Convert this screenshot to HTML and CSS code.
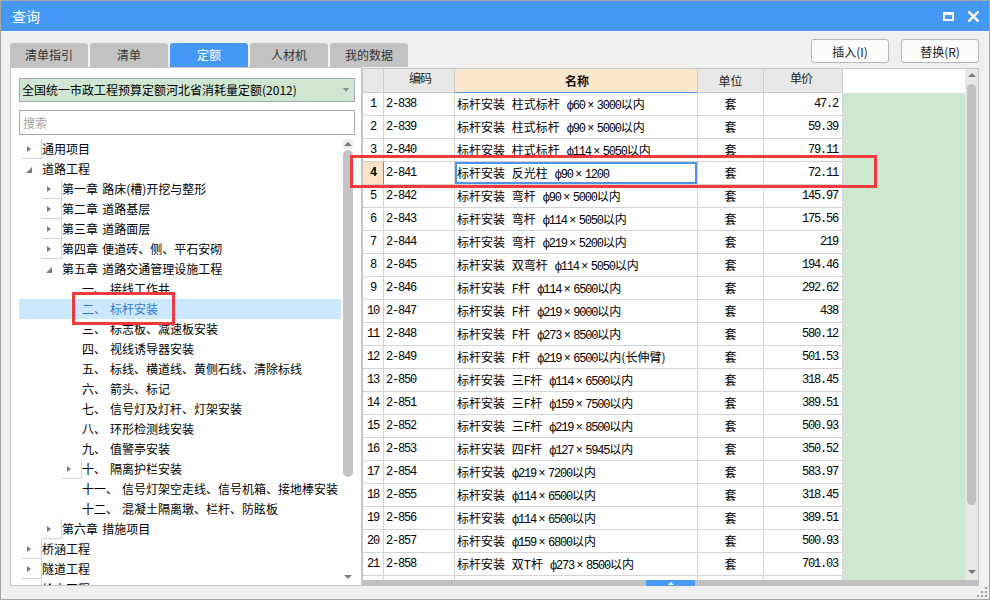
FILE: index.html
```html
<!DOCTYPE html>
<html lang="zh-CN">
<head>
<meta charset="utf-8">
<title>查询</title>
<link rel="stylesheet" href="styles.css">
</head>
<body>
<div class="window">
  <div class="titlebar">
    <span class="title">查询</span>
    <div class="winbtns">
      <svg width="11" height="9" viewBox="0 0 11 9"><rect x="1" y="1.5" width="9" height="6.5" fill="none" stroke="#fff" stroke-width="2"/><rect x="0" y="0" width="11" height="3" fill="#fff"/></svg>
      <svg width="11" height="11" viewBox="0 0 11 11"><path d="M1.2 1.2L9.8 9.8M9.8 1.2L1.2 9.8" stroke="#fff" stroke-width="2.4" stroke-linecap="square"/></svg>
    </div>
  </div>
  <div class="content">
    <div class="left">
      <div class="tabs">
        <div class="tab">清单指引</div>
        <div class="tab">清单</div>
        <div class="tab on">定额</div>
        <div class="tab">人材机</div>
        <div class="tab">我的数据</div>
      </div>
      <div class="panel">
        <div class="select"><span>全国统一市政工程预算定额河北省消耗量定额(2012)</span><i class="caret"></i></div>
        <div class="search">搜索</div>
        <div class="treewrap">
          <div class="tree">
            <div class="row l0"><i class="tw c"></i><span>通用项目</span></div>
            <div class="row l0"><i class="tw e"></i><span>道路工程</span></div>
            <div class="row l1"><i class="tw c"></i><span>第一章 路床(槽)开挖与整形</span></div>
            <div class="row l1"><i class="tw c"></i><span>第二章 道路基层</span></div>
            <div class="row l1"><i class="tw c"></i><span>第三章 道路面层</span></div>
            <div class="row l1"><i class="tw c"></i><span>第四章 便道砖、侧、平石安砌</span></div>
            <div class="row l1"><i class="tw e"></i><span>第五章 道路交通管理设施工程</span></div>
            <div class="row l2"><i class="tw"></i><span class="num">一、</span><span>接线工作井</span></div>
            <div class="row l2 sel"><i class="tw"></i><span class="num">二、</span><span>标杆安装</span></div>
            <div class="row l2"><i class="tw"></i><span class="num">三、</span><span>标志板、减速板安装</span></div>
            <div class="row l2"><i class="tw"></i><span class="num">四、</span><span>视线诱导器安装</span></div>
            <div class="row l2"><i class="tw"></i><span class="num">五、</span><span>标线、横道线、黄侧石线、清除标线</span></div>
            <div class="row l2"><i class="tw"></i><span class="num">六、</span><span>箭头、标记</span></div>
            <div class="row l2"><i class="tw"></i><span class="num">七、</span><span>信号灯及灯杆、灯架安装</span></div>
            <div class="row l2"><i class="tw"></i><span class="num">八、</span><span>环形检测线安装</span></div>
            <div class="row l2"><i class="tw"></i><span class="num">九、</span><span>值警亭安装</span></div>
            <div class="row l2"><i class="tw c"></i><span class="num">十、</span><span>隔离护栏安装</span></div>
            <div class="row l2"><i class="tw"></i><span class="num">十一、</span><span>信号灯架空走线、信号机箱、接地棒安装</span></div>
            <div class="row l2"><i class="tw"></i><span class="num">十二、</span><span>混凝土隔离墩、栏杆、防眩板</span></div>
            <div class="row l1"><i class="tw c"></i><span>第六章 措施项目</span></div>
            <div class="row l0"><i class="tw c"></i><span>桥涵工程</span></div>
            <div class="row l0"><i class="tw c"></i><span>隧道工程</span></div>
            <div class="row l0"><i class="tw c"></i><span>给水工程</span></div>
          </div>
          <div class="vs-s">
            <div class="arr"><i class="up"></i></div>
            <div class="thumb"></div>
            <div class="fill"></div>
            <div class="arr dn-wrap"><i class="dn"></i></div>
          </div>
        </div>
      </div>
    </div>
    <div class="right">
      <div class="btns">
        <button class="btn">插入(I)</button>
        <button class="btn">替换(R)</button>
      </div>
      <div class="tablebox">
        <div class="tmain">
          <div class="grid">
            <div class="r hd"><div class="c n"></div><div class="c k">编码</div><div class="c nm">名称</div><div class="c u">单位</div><div class="c p">单价</div><div class="c f"></div></div>
            <div class="r"><div class="c n">1</div><div class="c k">2-838</div><div class="c nm">标杆安装 柱式标杆<span class="s">ф60</span><span class="x">×</span><span class="m">3000</span>以内</div><div class="c u">套</div><div class="c p">47.2</div><div class="c f"></div></div>
            <div class="r"><div class="c n">2</div><div class="c k">2-839</div><div class="c nm">标杆安装 柱式标杆<span class="s">ф90</span><span class="x">×</span><span class="m">5000</span>以内</div><div class="c u">套</div><div class="c p">59.39</div><div class="c f"></div></div>
            <div class="r"><div class="c n">3</div><div class="c k">2-840</div><div class="c nm">标杆安装 柱式标杆<span class="s">ф114</span><span class="x">×</span><span class="m">5050</span>以内</div><div class="c u">套</div><div class="c p">79.11</div><div class="c f"></div></div>
            <div class="r cur"><div class="c n">4</div><div class="c k">2-841</div><div class="c nm">标杆安装 反光柱<span class="s">ф90</span><span class="x">×</span><span class="m">1200</span></div><div class="c u">套</div><div class="c p">72.11</div><div class="c f"></div></div>
            <div class="r"><div class="c n">5</div><div class="c k">2-842</div><div class="c nm">标杆安装 弯杆<span class="s">ф90</span><span class="x">×</span><span class="m">5000</span>以内</div><div class="c u">套</div><div class="c p">145.97</div><div class="c f"></div></div>
            <div class="r"><div class="c n">6</div><div class="c k">2-843</div><div class="c nm">标杆安装 弯杆<span class="s">ф114</span><span class="x">×</span><span class="m">5050</span>以内</div><div class="c u">套</div><div class="c p">175.56</div><div class="c f"></div></div>
            <div class="r"><div class="c n">7</div><div class="c k">2-844</div><div class="c nm">标杆安装 弯杆<span class="s">ф219</span><span class="x">×</span><span class="m">5200</span>以内</div><div class="c u">套</div><div class="c p">219</div><div class="c f"></div></div>
            <div class="r"><div class="c n">8</div><div class="c k">2-845</div><div class="c nm">标杆安装 双弯杆<span class="s">ф114</span><span class="x">×</span><span class="m">5050</span>以内</div><div class="c u">套</div><div class="c p">194.46</div><div class="c f"></div></div>
            <div class="r"><div class="c n">9</div><div class="c k">2-846</div><div class="c nm">标杆安装 F杆<span class="s">ф114</span><span class="x">×</span><span class="m">6500</span>以内</div><div class="c u">套</div><div class="c p">292.62</div><div class="c f"></div></div>
            <div class="r"><div class="c n">10</div><div class="c k">2-847</div><div class="c nm">标杆安装 F杆<span class="s">ф219</span><span class="x">×</span><span class="m">9000</span>以内</div><div class="c u">套</div><div class="c p">438</div><div class="c f"></div></div>
            <div class="r"><div class="c n">11</div><div class="c k">2-848</div><div class="c nm">标杆安装 F杆<span class="s">ф273</span><span class="x">×</span><span class="m">8500</span>以内</div><div class="c u">套</div><div class="c p">580.12</div><div class="c f"></div></div>
            <div class="r"><div class="c n">12</div><div class="c k">2-849</div><div class="c nm">标杆安装 F杆<span class="s">ф219</span><span class="x">×</span><span class="m">6500</span>以内(长伸臂)</div><div class="c u">套</div><div class="c p">501.53</div><div class="c f"></div></div>
            <div class="r"><div class="c n">13</div><div class="c k">2-850</div><div class="c nm">标杆安装 三F杆<span class="s">ф114</span><span class="x">×</span><span class="m">6500</span>以内</div><div class="c u">套</div><div class="c p">318.45</div><div class="c f"></div></div>
            <div class="r"><div class="c n">14</div><div class="c k">2-851</div><div class="c nm">标杆安装 三F杆<span class="s">ф159</span><span class="x">×</span><span class="m">7500</span>以内</div><div class="c u">套</div><div class="c p">389.51</div><div class="c f"></div></div>
            <div class="r"><div class="c n">15</div><div class="c k">2-852</div><div class="c nm">标杆安装 三F杆<span class="s">ф219</span><span class="x">×</span><span class="m">8500</span>以内</div><div class="c u">套</div><div class="c p">500.93</div><div class="c f"></div></div>
            <div class="r"><div class="c n">16</div><div class="c k">2-853</div><div class="c nm">标杆安装 四F杆<span class="s">ф127</span><span class="x">×</span><span class="m">5945</span>以内</div><div class="c u">套</div><div class="c p">350.52</div><div class="c f"></div></div>
            <div class="r"><div class="c n">17</div><div class="c k">2-854</div><div class="c nm">标杆安装<span class="s">ф219</span><span class="x">×</span><span class="m">7200</span>以内</div><div class="c u">套</div><div class="c p">583.97</div><div class="c f"></div></div>
            <div class="r"><div class="c n">18</div><div class="c k">2-855</div><div class="c nm">标杆安装<span class="s">ф114</span><span class="x">×</span><span class="m">6500</span>以内</div><div class="c u">套</div><div class="c p">318.45</div><div class="c f"></div></div>
            <div class="r"><div class="c n">19</div><div class="c k">2-856</div><div class="c nm">标杆安装<span class="s">ф114</span><span class="x">×</span><span class="m">6500</span>以内</div><div class="c u">套</div><div class="c p">389.51</div><div class="c f"></div></div>
            <div class="r"><div class="c n">20</div><div class="c k">2-857</div><div class="c nm">标杆安装<span class="s">ф159</span><span class="x">×</span><span class="m">6800</span>以内</div><div class="c u">套</div><div class="c p">500.93</div><div class="c f"></div></div>
            <div class="r"><div class="c n">21</div><div class="c k">2-858</div><div class="c nm">标杆安装 双T杆<span class="s">ф273</span><span class="x">×</span><span class="m">8500</span>以内</div><div class="c u">套</div><div class="c p">701.03</div><div class="c f"></div></div>
            <div class="r"><div class="c n"></div><div class="c k"></div><div class="c nm"></div><div class="c u"></div><div class="c p"></div><div class="c f"></div></div>
          </div>
          <div class="vs-b">
            <div class="arr"><i class="up"></i></div>
            <div class="thumb"></div>
            <div class="fill"></div>
            <div class="arr"><i class="dn"></i></div>
          </div>
        </div>
        <div class="hscroll"><div class="hthumb"><i class="hup"></i></div></div>
      </div>
    </div>
  </div>
  <div class="mark mark-tree"></div>
  <div class="mark mark-row"></div>
  <svg class="grip" width="10" height="10" viewBox="0 0 10 10" fill="#a0a0a0">
    <rect x="8" y="0" width="2" height="2"/>
    <rect x="4" y="4" width="2" height="2"/><rect x="8" y="4" width="2" height="2"/>
    <rect x="0" y="8" width="2" height="2"/><rect x="4" y="8" width="2" height="2"/><rect x="8" y="8" width="2" height="2"/>
  </svg>
</div>
</body>
</html>
```

FILE: styles.css
```css
* { box-sizing: border-box; }
html, body { margin: 0; padding: 0; background: #f0f0f0; }
body {
  font-family: "Noto Sans CJK SC", "Microsoft YaHei", sans-serif;
  font-size: 12px;
  color: #000;
}
.window {
  position: relative;
  width: 990px;
  height: 600px;
  border: 1px solid #a6a6a6;
  background: #f0f0f0;
  display: flex;
  flex-direction: column;
  overflow: hidden;
}
.titlebar {
  flex: none;
  height: 30px;
  background: #4499f7;
  color: #fff;
  display: flex;
  align-items: center;
  justify-content: space-between;
  padding: 0 10px 0 11px;
}
.title { font-size: 14px; line-height: 30px; }
.winbtns { display: flex; align-items: center; gap: 14px; }
.winbtns svg { display: block; }

.content {
  flex: 1;
  min-height: 0;
  display: flex;
  padding: 0 9px 13px 9px;
}

/* left */
.left { width: 352px; flex: none; display: flex; flex-direction: column; position: relative; z-index: 1; }
.tabs { display: flex; gap: 2px; margin-top: 12px; height: 24px; flex: none; }
.tab {
  flex: none;
  width: 78px;
  height: 24px;
  background: #c3c3c3;
  border-radius: 3px 3px 0 0;
  color: #333;
  text-align: center;
  line-height: 24px;
}
.tab.on { background: #4499f7; color: #fff; }
.panel {
  flex: 1;
  min-height: 0;
  background: #fff;
  border: 1px solid #c6c6c6;
  padding: 10px 6px 0 8px;
  display: flex;
  flex-direction: column;
}
.select {
  flex: none;
  height: 24px;
  border: 1px solid #a9a9a9;
  background: #cfe7d2;
  display: flex;
  align-items: center;
  padding-left: 2px;
  line-height: 22px;
}
.caret {
  margin-left: auto;
  margin-right: 5px;
  width: 0; height: 0;
  border-left: 3.5px solid transparent;
  border-right: 3.5px solid transparent;
  border-top: 4px solid #8a8a8a;
}
.search {
  flex: none;
  height: 25px;
  margin-top: 8px;
  border: 1px solid #a9a9a9;
  color: #a3a3a3;
  line-height: 23px;
  padding-left: 3px;
}
.treewrap { flex: 1; min-height: 0; display: flex; margin-top: 4px; }
.tree { flex: 1; overflow: hidden; }
.row {
  height: 20px;
  display: flex;
  align-items: center;
  white-space: nowrap;
  line-height: 20px;
  word-spacing: 1.5px;
}
.l0 { padding-left: 3px; }
.l1 { padding-left: 23px; }
.l2 { padding-left: 43px; }
.tw { width: 20px; height: 20px; flex: none; display: flex; align-items: center; }
.tw.c::before {
  content: "";
  display: block;
  width: 0;
  height: 0;
  margin-left: 5px;
  border-left: 4px solid #7d7d7d;
  border-top: 3.5px solid transparent;
  border-bottom: 3.5px solid transparent;
}
.tw.e::before {
  content: "";
  display: block;
  width: 0;
  height: 0;
  margin-left: 4px;
  margin-top: 2px;
  border-bottom: 6px solid #7d7d7d;
  border-left: 6px solid transparent;
}
.num { margin-right: 4px; }
.row.sel { background: #cce8ff; color: #2c7ad8; }

.vs-s {
  width: 10px;
  margin: 0 2px;
  flex: none;
  display: flex;
  flex-direction: column;
  align-items: center;
}
.arr { height: 10px; width: 100%; flex: none; display: flex; align-items: center; justify-content: center; }
.vs-s .arr:first-child { background: #ececec; }
.up {
  display: block;
  width: 0; height: 0;
  border-left: 4px solid transparent;
  border-right: 4px solid transparent;
  border-bottom: 4px solid #7a7a7a;
}
.dn {
  display: block;
  width: 0; height: 0;
  border-left: 4px solid transparent;
  border-right: 4px solid transparent;
  border-top: 4px solid #7a7a7a;
}
.vs-s .thumb { width: 10px; height: 327px; margin-top: 1px; border-radius: 5px; background: #c3c3c3; }
.fill { flex: 1; }
.vs-s .dn-wrap { margin-bottom: 3px; }

/* right */
.right { width: 617px; flex: none; display: flex; flex-direction: column; }
.btns { display: flex; justify-content: flex-end; gap: 12px; margin-top: 8px; }
.btn {
  width: 78px;
  height: 24px;
  padding: 0;
  border: 1px solid #b6b6b6;
  border-radius: 3px;
  background: #fcfcfc;
  color: #222;
  font-family: "Noto Sans CJK SC", sans-serif;
  font-size: 12px;
}
.tablebox {
  flex: 1;
  min-height: 0;
  margin-top: 5px;
  border: 1px solid #c4c4c4;
  border-bottom: none;
  background: #fff;
  display: flex;
  flex-direction: column;
}
.tmain { flex: 1; min-height: 0; display: flex; }
.grid { width: 602px; flex: none; overflow: hidden; }
.r { display: flex; height: 23px; }
.r.hd { height: 24px; }
.c {
  flex: none;
  height: 100%;
  border-right: 1px solid #d4d4d4;
  border-bottom: 1px solid #d4d4d4;
  line-height: 22px;
  white-space: nowrap;
  overflow: hidden;
}
.hd .c { line-height: 23px; background: #e8e8e8; color: #222; text-align: center; border-color: #cdcdcd; }
.hd .nm { background: #fde6cc; font-weight: bold; color: #111; border-bottom-color: #4b94ea; }
.hd .f { background: #fff; }
.n {
  width: 21px;
  text-align: center;
  font-family: "Liberation Mono", monospace;
  font-size: 12px;
  letter-spacing: -1.2px;
}
.k {
  width: 71px;
  padding-left: 2px;
  font-family: "Liberation Mono", monospace;
  font-size: 12px;
  letter-spacing: -1.2px;
}
.nm { width: 243px; padding-left: 2px; word-spacing: 4px; }
.s, .m {
  font-family: "Liberation Mono", monospace;
  font-size: 12px;
  letter-spacing: -1.2px;
  word-spacing: 0;
}
.s { margin-left: 7px; }
.x {
  display: inline-block;
  width: 12px;
  text-align: center;
  font-family: "Liberation Sans", sans-serif;
  font-size: 12px;
}
.u { width: 66px; text-align: center; }
.p {
  width: 79px;
  text-align: right;
  padding-right: 4px;
  font-family: "Liberation Mono", monospace;
  font-size: 12px;
  letter-spacing: -1.2px;
}
.f { width: 122px; background: #cde7d1; border: none; }
.cur .n { background: #fde4c6; font-weight: bold; border-right: 1px solid #4b94ea; }
.cur .nm { box-shadow: inset 0 0 0 2px #4b94ea; }

.vs-b {
  width: 13px;
  flex: none;
  background: #e8e8e8;
  display: flex;
  flex-direction: column;
  align-items: center;
}
.vs-b .arr { height: 12px; }
.vs-b .thumb { width: 9px; height: 421px; margin-top: 3px; border-radius: 4.5px; background: #c1c1c1; }
.vs-b .arr:last-child { margin-bottom: 2px; }

.hscroll { flex: none; height: 6px; background: #c2c2c2; display: flex; }
.hthumb {
  margin-left: 283px;
  width: 49px;
  height: 6px;
  background: #4a9bf6;
  display: flex;
  align-items: center;
  justify-content: center;
}
.hup {
  display: block;
  width: 0; height: 0;
  border-left: 3px solid transparent;
  border-right: 3px solid transparent;
  border-bottom: 3px solid #fff;
}

/* annotation boxes */
.mark { position: absolute; border: 3px solid #f03a3c; z-index: 2; }
.mark-tree { left: 71px; top: 291px; width: 103px; height: 33px; }
.mark-row { left: 349px; top: 154px; width: 527px; height: 33px; }
.grip { position: absolute; right: 2px; bottom: 2px; }
```
